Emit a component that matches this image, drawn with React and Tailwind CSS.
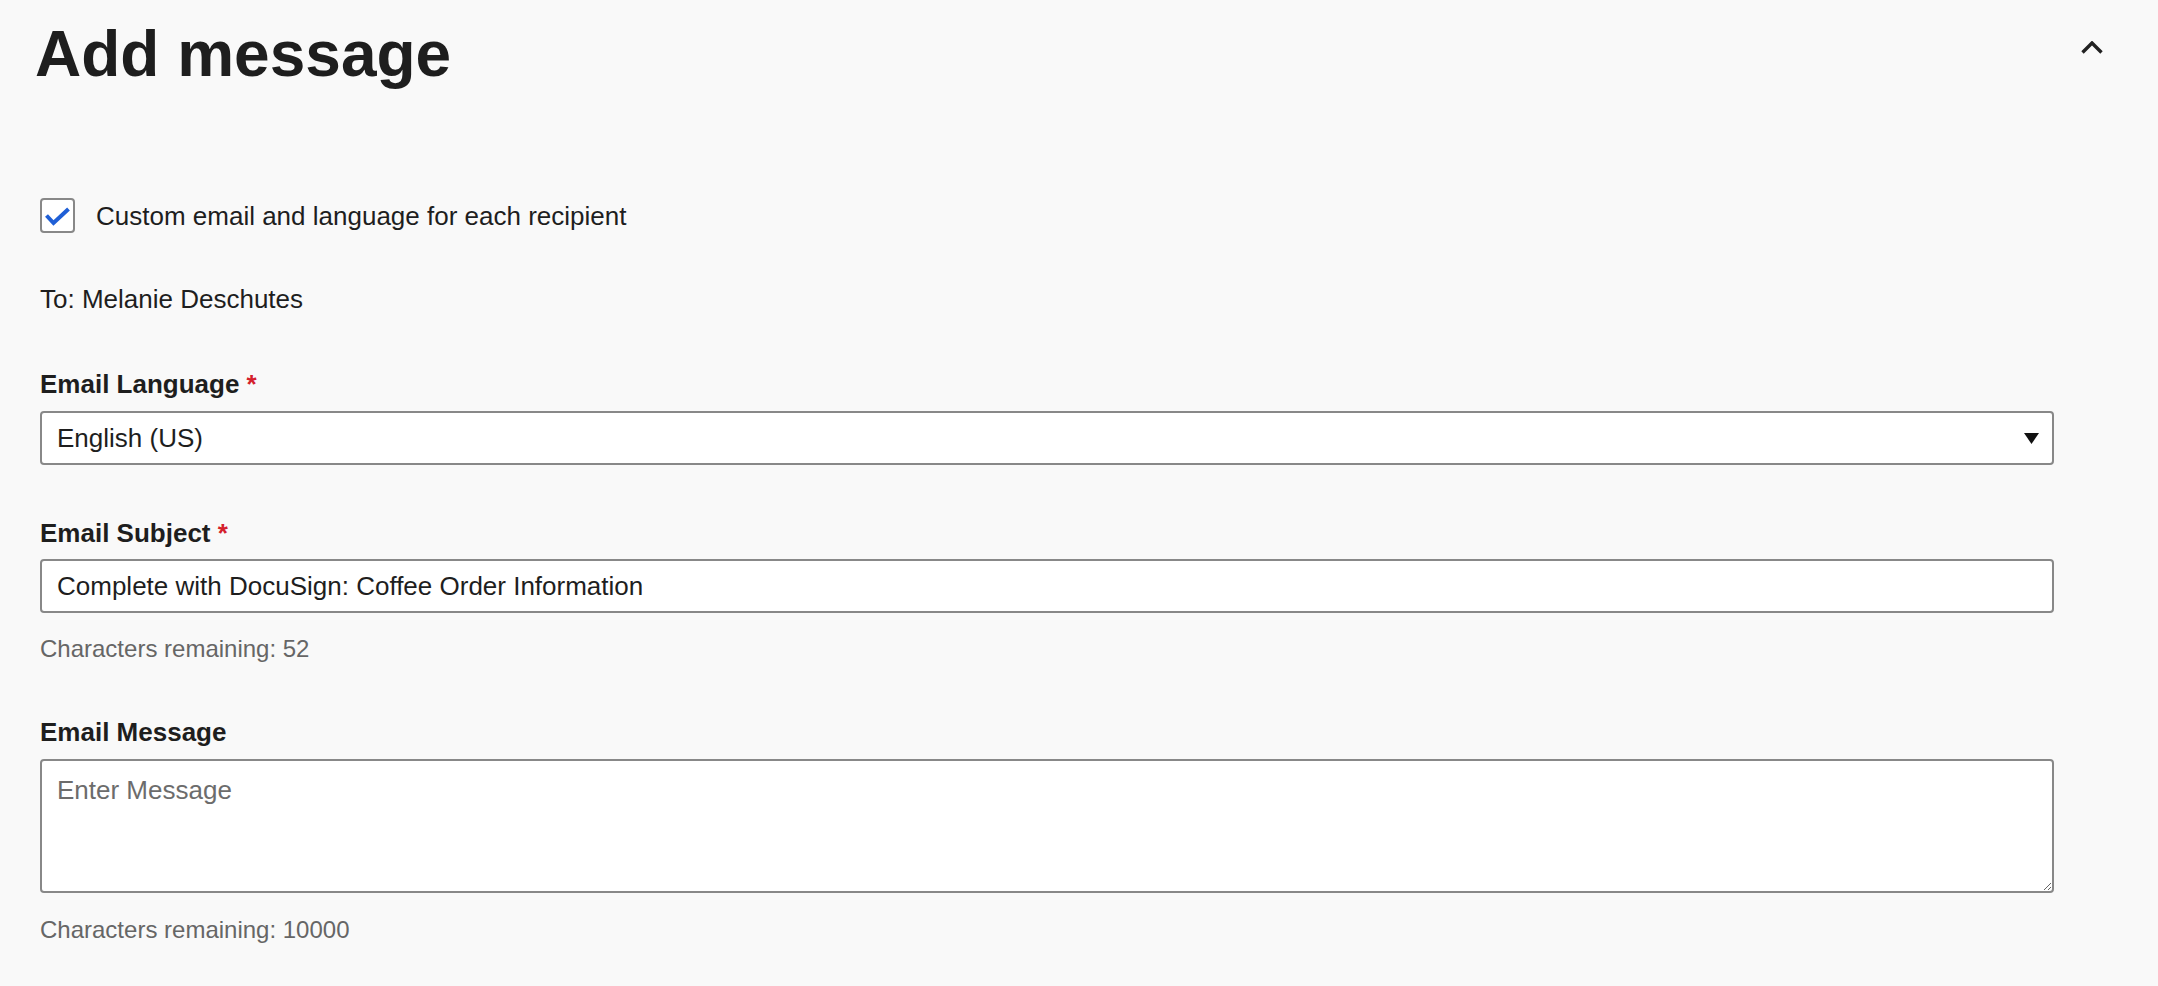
export default function App() {
  return (
    <div className="min-h-screen bg-[#f9f9f9] font-['Liberation_Sans',Arial,sans-serif] text-[#1e1e1e]">
      <div className="pl-[35px] pr-[55px] pt-[22px] pb-[40px]">
        <div className="flex items-start justify-between">
          <h1 className="text-[64px] font-bold leading-[64px]">Add message</h1>
          <button type="button" aria-label="Collapse" className="mt-[19px]">
            <svg width="22" height="13" viewBox="0 0 22 13" fill="none">
              <polyline points="1.5,11.5 11,2 20.5,11.5" stroke="#222" strokeWidth="3.4" />
            </svg>
          </button>
        </div>

        <div className="ml-[5px] w-[2014px]">
          <label className="mt-[112px] flex items-center gap-[21px]">
            <span className="flex h-[35px] w-[35px] items-center justify-center rounded-[4px] border-2 border-[#888] bg-white">
              <svg width="31" height="31" viewBox="0 0 31 31" fill="none">
                <polyline points="4.5,15.5 11.5,23 26.5,9" stroke="#1f5fd6" strokeWidth="4" />
              </svg>
            </span>
            <span className="text-[26px] leading-[30px]">Custom email and language for each recipient</span>
          </label>

          <p className="mt-[51px] text-[26px] leading-[30px]">To: Melanie Deschutes</p>

          <div className="mt-[55px] text-[26px] font-bold leading-[30px]">
            Email Language <span className="text-[#d4202c]">*</span>
          </div>
          <div className="mt-[12px] flex h-[54px] items-center justify-between rounded-[4px] border-2 border-[#888] bg-white pl-[15px] pr-[13px]">
            <span className="text-[26px] leading-[30px]">English (US)</span>
            <svg width="15" height="11" viewBox="0 0 15 11">
              <polygon points="0,0 15,0 7.5,11" fill="#111" />
            </svg>
          </div>

          <div className="mt-[53px] text-[26px] font-bold leading-[30px]">
            Email Subject <span className="text-[#d4202c]">*</span>
          </div>
          <input
            type="text"
            defaultValue="Complete with DocuSign: Coffee Order Information"
            className="mt-[11px] block h-[54px] w-full rounded-[4px] border-2 border-[#888] bg-white px-[15px] text-[26px] leading-[30px] text-[#1e1e1e] outline-none"
          />
          <p className="mt-[22px] text-[24px] leading-[28px] text-[#666]">Characters remaining: 52</p>

          <div className="mt-[54px] text-[26px] font-bold leading-[30px]">Email Message</div>
          <textarea
            placeholder="Enter Message"
            className="mt-[12px] block h-[134px] w-full rounded-[4px] border-2 border-[#888] bg-white px-[15px] pt-[14px] text-[26px] leading-[30px] outline-none placeholder:text-[#6c6c6c]"
          />
          <p className="mt-[23px] text-[24px] leading-[28px] text-[#666]">Characters remaining: 10000</p>
        </div>
      </div>
    </div>
  );
}
